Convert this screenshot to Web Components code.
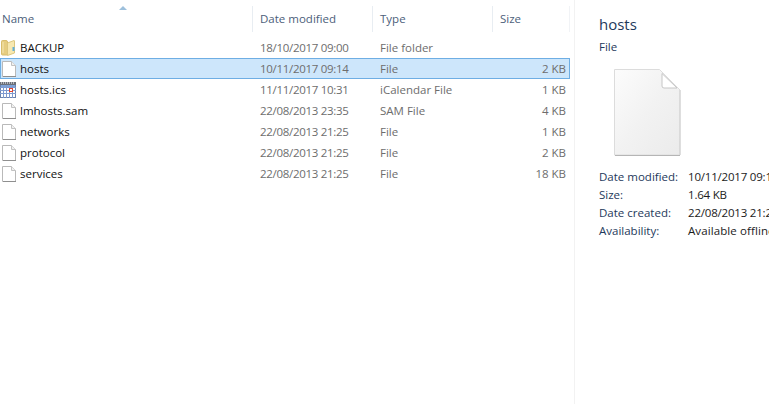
<!DOCTYPE html>
<html><head><meta charset="utf-8"><style>
html,body{margin:0;height:100%;background:#fff;overflow:hidden}
body{font:11.5px "Open Sans","Noto Sans",sans-serif}
</style></head><body>
<explorer-window>
<file-list>
<list-header></list-header>
<file-row kind="folder" name="BACKUP" date="18/10/2017 09:00" type="File folder" size=""></file-row>
<file-row kind="file" name="hosts" date="10/11/2017 09:14" type="File" size="2 KB" selected></file-row>
<file-row kind="cal" name="hosts.ics" date="11/11/2017 10:31" type="iCalendar File" size="1 KB"></file-row>
<file-row kind="file" name="lmhosts.sam" date="22/08/2013 23:35" type="SAM File" size="4 KB"></file-row>
<file-row kind="file" name="networks" date="22/08/2013 21:25" type="File" size="1 KB"></file-row>
<file-row kind="file" name="protocol" date="22/08/2013 21:25" type="File" size="2 KB"></file-row>
<file-row kind="file" name="services" date="22/08/2013 21:25" type="File" size="18 KB"></file-row>
</file-list>
<details-pane>
<prop-row label="Date modified:" value="10/11/2017 09:14"></prop-row>
<prop-row label="Size:" value="1.64 KB"></prop-row>
<prop-row label="Date created:" value="22/08/2013 21:25"></prop-row>
<prop-row label="Availability:" value="Available offline" wide></prop-row>
</details-pane>
</explorer-window>
<script>
const COLS='253px 120px 120px 77px';
const icons={
folder:`<svg width="14" height="16" viewBox="0 0 14 16"><path d="M.5 1.500q0-1 1-1h3.500q1.500 0 1.500 1.500v13h-5q-1 0-1-1z" fill="#e6cd80" stroke="#d8bd6c"/><path d="M6.500 3l6.500-2.500q.5 0 .5.500v12l-7 2.500z" fill="#f7e8b0" stroke="#dcc67e"/><path d="M2 2v11" stroke="#f5e7b4"/><rect x="11.500" y="7" width="2" height="4" fill="#62aed6"/></svg>`,
file:`<svg width="14" height="16" viewBox="0 0 14 16"><path d="M.5.5h9l4 4v11H.5z" fill="#fff" stroke="#b9b9b9"/><path d="M9.500.5v4h4" fill="#f1f1f1" stroke="#c2c2c2"/><path d="M1 15.500h13" stroke="#8f8f8f"/></svg>`,
cal:`<svg width="16" height="16" viewBox="0 0 16 16"><rect x=".5" y="2.500" width="15" height="13" fill="#fff" stroke="#6c84ad"/><rect x="0" y="0" width="16" height="3" fill="#6b6f78"/><path d="M1 1h1M3 1h1M5 1h1M7 1h1M9 1h1M11 1h1M13 1h1" stroke="#fff"/><rect x="1" y="3" width="14" height="2" fill="#7ea3d8"/><path d="M0 5.500h16M0 8.500h16M0 11.500h16M3.500 4v12M6.500 4v12M9.500 4v12M12.500 4v12" stroke="#7f9bd0"/><rect x="9" y="6" width="4" height="4" fill="#e2432c"/><rect x="10" y="7" width="2" height="2" fill="#fff"/></svg>`
};
const off={folder:'0',file:'1px',cal:'-1px'};
customElements.define('explorer-window',class extends HTMLElement{constructor(){super();this.attachShadow({mode:'open'}).innerHTML=`<style>:host{display:flex;height:404px;width:769px;overflow:hidden}</style><slot></slot>`}});
customElements.define('file-list',class extends HTMLElement{constructor(){super();this.attachShadow({mode:'open'}).innerHTML=`<style>:host{display:block;width:575px;flex:none;box-sizing:border-box;border-right:1px solid #f2f2f2;padding-right:4px}</style><slot></slot>`}});
customElements.define('list-header',class extends HTMLElement{constructor(){super();this.attachShadow({mode:'open'}).innerHTML=`<style>
:host{display:grid;grid-template-columns:${COLS};height:37px;color:#4c607a;position:relative}
div{padding:0 0 0 7px;height:26px;box-sizing:border-box;margin-top:6px;border-right:1px solid #e8edf2;line-height:13px;padding-top:6px}
div.first{padding-left:2px}
div:last-child{border-right:1px solid #f1f3f6}
svg{position:absolute;left:119px;top:6px}
</style><svg width="8" height="5" viewBox="0 0 8 5"><path d="M4 0l4 4H0z" fill="#9dc0dc"/></svg><div class="first">Name</div><div>Date modified</div><div>Type</div><div>Size</div>`}});
customElements.define('file-row',class extends HTMLElement{connectedCallback(){const a=n=>this.getAttribute(n)||'';
this.attachShadow({mode:'open'}).innerHTML=`<style>
:host{display:grid;grid-template-columns:${COLS};height:21px;box-sizing:border-box;line-height:21px;color:#6d6d6d;white-space:nowrap}
:host([selected]){background:#cde6fb;box-shadow:inset 0 0 0 1px #6eaee4}
.n{display:flex;align-items:center;gap:3px;padding-left:1px;color:#111}
.i{width:16px;display:flex;flex:none}
.i svg{margin-left:${off[a('kind')]};flex:none}
.d{padding-left:7px}
.t{letter-spacing:-.3px}
.s{text-align:right;padding-right:4px}
</style><div class="n"><span class="i">${icons[a('kind')]}</span><span>${a('name')}</span></div><div class="d t">${a('date')}</div><div class="d">${a('type')}</div><div class="s">${a('size')}</div>`}});
customElements.define('details-pane',class extends HTMLElement{constructor(){super();this.attachShadow({mode:'open'}).innerHTML=`<style>
:host{display:block;flex:1;min-width:0;padding:14px 0 0 24px;overflow:hidden;color:#1e395b}
h1{margin:0;font:400 15px/20px "Open Sans","Noto Sans",sans-serif}
p{margin:4px 0 0;line-height:18px}
.ic{display:block;margin:13px 0 12px 15px}
</style><h1>hosts</h1><p>File</p>
<svg class="ic" width="67" height="87" viewBox="0 0 67 87"><defs><linearGradient id="g" x1="0" y1="0" x2="1" y2="1"><stop offset="0" stop-color="#fcfcfc"/><stop offset=".5" stop-color="#f2f2f2"/><stop offset="1" stop-color="#ebebeb"/></linearGradient></defs><path d="M.5.5h45l20.500 20.500v65H.5z" fill="url(#g)" stroke="#dcdcdc"/><path d="M1 86.500h65" stroke="#b5b5b5"/><path d="M66 21v65" stroke="#cfcfcf"/><path d="M48 4.500v12.500q0 2 2 2h13z" fill="#fff" stroke="#c6c6c6"/></svg>
<slot></slot>`}});
customElements.define('prop-row',class extends HTMLElement{connectedCallback(){const a=n=>this.getAttribute(n);
this.attachShadow({mode:'open'}).innerHTML=`<style>
:host{display:grid;grid-template-columns:89px max-content;height:18px;line-height:18px;white-space:nowrap}
span:first-child{color:#5b6c82}span:last-child{color:#1b1b1b;letter-spacing:-.2px}
:host([wide]) span:last-child{letter-spacing:.1px}
</style><span>${a('label')}</span><span>${a('value')}</span>`}});
</script></body></html>
